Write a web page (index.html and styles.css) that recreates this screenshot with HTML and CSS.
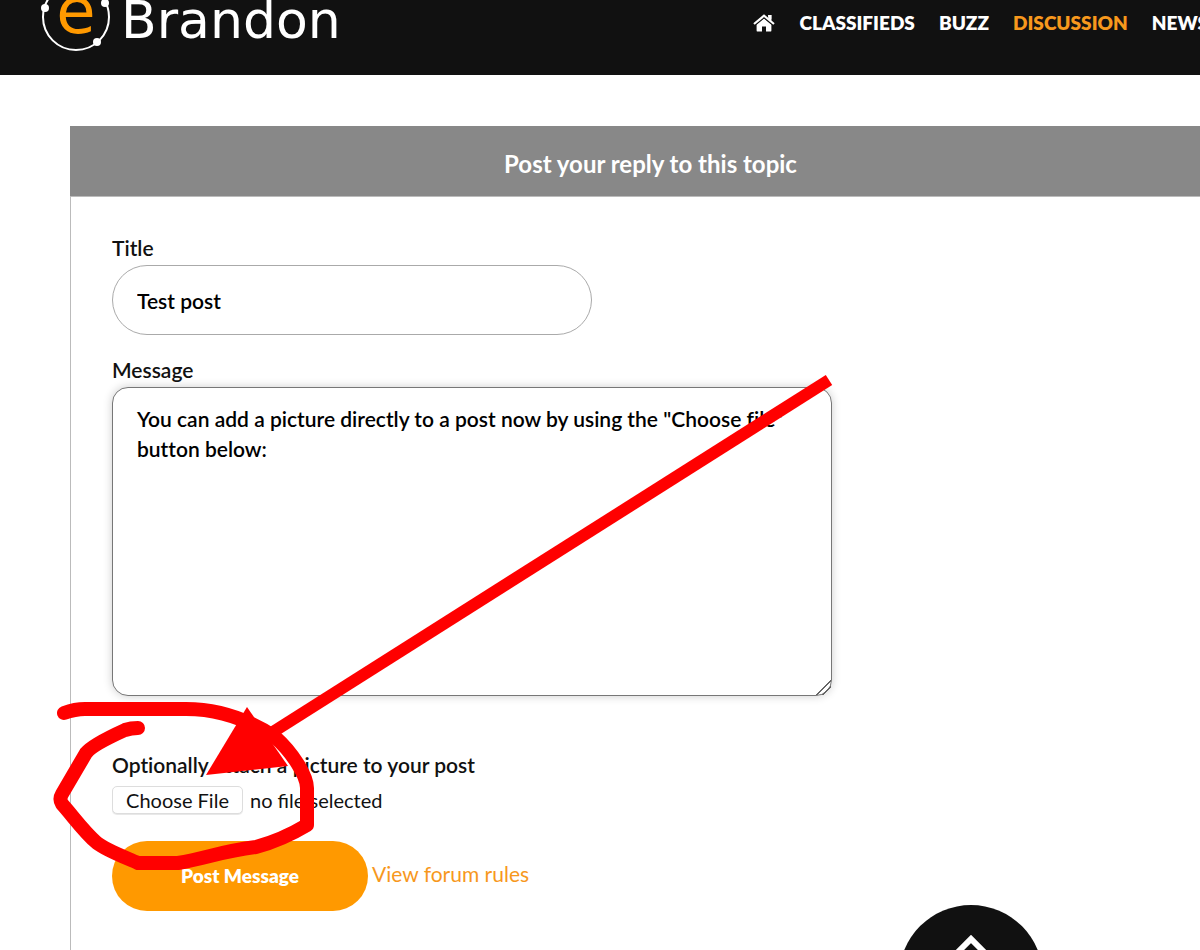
FILE: index.html
```html
<!DOCTYPE html>
<html lang="en">
<head>
    <meta charset="UTF-8">
    <meta name="viewport" content="width=device-width, initial-scale=1.0">
    <title>eBrandon - Post Reply</title>
    <link rel="stylesheet" href="styles.css">
</head>
<body>

    <header class="header">
        <a class="logo" href="#">
            <span class="logo-mark">
                <svg class="logo-ring" viewBox="0 0 72 72" aria-hidden="true">
                    <circle cx="36" cy="37" r="33" fill="none" stroke="#fff" stroke-width="2"/>
                    <circle cx="5" cy="28" r="4" fill="#fff"/>
                    <circle cx="65" cy="23" r="4" fill="#fff"/>
                    <circle cx="57" cy="62" r="4" fill="#fff"/>
                </svg>
                <span class="logo-e">e</span>
            </span>
            <span class="logo-name">Brandon</span>
        </a>
        <nav class="nav">
            <a href="#" aria-label="Home">
                <svg class="home-icon" viewBox="0 0 22 18" aria-hidden="true">
                    <path d="M11 4.6 L3.6 10.8 V16.4 Q3.6 17.6 4.8 17.6 H9 V12.6 H13 V17.6 H17.2 Q18.4 17.6 18.4 16.4 V10.8 Z" fill="#fff"/>
                    <path d="M15.2 1 H18.4 V7 L15.2 4.4 Z" fill="#fff"/>
                    <path d="M1 10 L11 1.7 L21 10" fill="none" stroke="#111" stroke-width="4"/>
                    <path d="M15.2 1 H18.4 V7 L15.2 4.4 Z" fill="#fff"/>
                    <path d="M1 10 L11 1.7 L21 10" fill="none" stroke="#fff" stroke-width="2.2"/>
                </svg>
            </a>
            <a href="#">CLASSIFIEDS</a>
            <a href="#">BUZZ</a>
            <a href="#" class="active">DISCUSSION</a>
            <a href="#">NEWS</a>
        </nav>
    </header>

    <main class="page">
        <section class="panel">
            <h1>Post your reply to this topic</h1>
            <form class="reply-form">
                <label for="title">Title</label>
                <input type="text" id="title" class="title-input" value="Test post">

                <label for="message">Message</label>
                <textarea id="message" class="message-input">You can add a picture directly to a post now by using the "Choose file" button below:</textarea>

                <label for="picture">Optionally attach a picture to your post</label>
                <div class="file-row">
                    <input type="file" id="picture" class="file-input">
                    <span>no file selected</span>
                </div>

                <div class="actions">
                    <button type="submit" class="post-button">Post Message</button>
                    <a href="#">View forum rules</a>
                </div>
            </form>
        </section>

        <!-- Hand drawn arrow and circle -->
        <svg class="marker" width="850" height="900" viewBox="0 0 850 900" aria-hidden="true">
            <path d="M64 713 Q75 709 85 709 H186 C222 709 252 722 275 737 C293 753 307 776 307 788 V825 Q282 840 256 847 C240 849 222 853 210 856 Q190 861 178 863 H138 C122 856 106 850 97 843 C84 832 72 815 62 804 Q59 799 62 794 L86 753 Q92 745 125 730 Q131 728 138 728" fill="none" stroke="#f00" stroke-width="14" stroke-linecap="round" stroke-linejoin="round"/>
            <path d="M829 380 L265 737" fill="none" stroke="#f00" stroke-width="12"/>
            <path d="M206 775 L247 707 L288 766 Z" fill="#f00"/>
        </svg>
    </main>

    <button type="button" class="to-top" aria-label="Back to top">
        <svg width="60" height="40" viewBox="0 0 60 40" aria-hidden="true">
            <path d="M6 28 L30 4 L54 28" fill="none" stroke="#fff" stroke-width="6"/>
        </svg>
    </button>

</body>
</html>
```
FILE: styles.css
```css
* {
    box-sizing: border-box;
}
body {
    margin: 0;
    min-height: 100vh;
    font-family: Lato, sans-serif;
    font-size: 21px;
    line-height: 30px;
    color: #111;
    background: #fff;
    overflow-x: hidden;
}
a {
    color: #f7981d;
    text-decoration: none;
}
/* Header */
.header {
    display: flex;
    justify-content: space-between;
    width: calc(100% + 32px);
    height: 75px;
    padding: 0 12px 0 40px;
    background: #111;
}
.logo {
    display: flex;
    gap: 9px;
    height: 44px;
    align-items: center;
    color: #fff;
}
.logo-mark {
    display: grid;
    place-items: center;
    width: 72px;
    height: 72px;
    margin-top: -12px;
}
.logo-ring,
.logo-e {
    grid-area: 1 / 1;
}
.logo-ring {
    width: 72px;
    height: 72px;
}
.logo-e {
    padding-bottom: 10px;
    font: 64px/60px "DejaVu Sans", sans-serif;
    color: #f90;
}
.logo-name {
    padding-bottom: 4px;
    font: 52px/52px "DejaVu Sans", sans-serif;
}
.nav {
    display: flex;
    align-items: center;
    height: 46px;
}
.nav a {
    padding: 0 12px;
    font-size: 19px;
    font-weight: 800;
    color: #fff;
}
.nav .active {
    color: #f7981d;
}
.home-icon {
    display: block;
    width: 22px;
    height: 18px;
}
/* Reply panel */
.page {
    width: calc(100% + 32px);
    padding: 51px 0 0 70px;
}
.panel {
    border: 1px solid #bbb;
    border-top: 0;
}
.panel h1 {
    margin: 0 0 0 -1px;
    padding: 23px 0 17px;
    font-size: 24px;
    font-weight: bold;
    line-height: 30px;
    text-align: center;
    color: #fff;
    background: #888;
    border-bottom: 1px solid #bbb;
}
.reply-form {
    padding: 36px 41px 60px;
}
.reply-form label {
    display: block;
    font-weight: 600;
    font-variant-ligatures: none;
}
.title-input,
.message-input {
    display: block;
    padding: 16px 24px;
    font: inherit;
    font-weight: 600;
    font-variant-ligatures: none;
    color: #000;
    background: #fff;
    border: 1px solid #aaa;
}
.title-input {
    width: 480px;
    height: 70px;
    margin: 2px 0 20px;
    border-radius: 35px;
}
.message-input {
    width: 720px;
    height: 309px;
    margin: 2px 0 54px;
    border-color: #777;
    border-radius: 16px;
    box-shadow: 0 0 10px rgba(0, 0, 0, 0.2);
}
.message-input::-webkit-resizer {
    background: linear-gradient(135deg, transparent 48%, #666 48% 56%, transparent 56% 68%, #666 68% 76%, transparent 76%);
}
.file-row {
    display: flex;
    align-items: center;
    gap: 7px;
    margin: 5px 0 26px;
    font-size: 20px;
}
.file-input {
    width: 131px;
    height: 30px;
    font: inherit;
    color: transparent;
}
.file-input::file-selector-button {
    width: 131px;
    height: 28px;
    margin: 0;
    padding: 0;
    font: inherit;
    line-height: 26px;
    color: #111;
    background: #fff;
    border: 1px solid #ddd;
    border-radius: 5px;
    box-shadow: 0 1px 1px rgba(0, 0, 0, 0.1);
}
.actions {
    display: flex;
    align-items: center;
    gap: 4px;
}
.actions a {
    padding-bottom: 4px;
}
.post-button {
    width: 256px;
    height: 70px;
    padding: 0 0 2px;
    font: 800 19px Lato, sans-serif;
    color: #fff;
    background: #f90;
    border: 0;
    border-radius: 35px;
    cursor: pointer;
}
.marker {
    position: absolute;
    top: 0;
    left: 0;
    pointer-events: none;
}
.to-top {
    position: fixed;
    right: 157px;
    bottom: -99px;
    display: flex;
    justify-content: center;
    width: 144px;
    height: 144px;
    padding: 30px 0;
    background: #111;
    border: 0;
    border-radius: 50%;
    cursor: pointer;
}
```
